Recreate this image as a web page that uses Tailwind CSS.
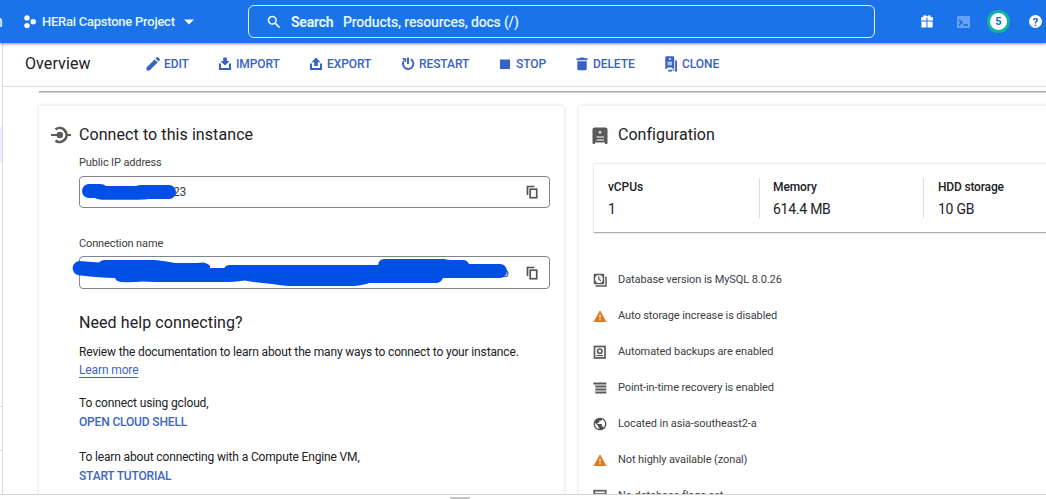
<!DOCTYPE html>
<html lang="en">
<head>
<meta charset="utf-8">
<title>Overview</title>
<script src="https://cdn.jsdelivr.net/npm/@tailwindcss/browser@4"></script>
</head>
<body class="w-[1046px] h-[499px] overflow-hidden bg-white font-['Roboto',sans-serif] text-[#202124] text-xs whitespace-nowrap flex flex-col">
<header class="relative z-10 h-[43px] shrink-0 bg-[#1a73e8] text-white flex items-center shadow-[0_1px_3px_rgba(0,0,0,0.45)]">
  <div class="w-6 flex justify-start overflow-hidden"><span class="-ml-[6px] mt-px text-base leading-5">n</span></div>
  <svg class="w-3 h-[14px]" viewBox="0 0 12 14" fill="#fff"><circle cx="3" cy="2.9" r="2.7"/><circle cx="3" cy="10.6" r="2.7"/><circle cx="9.2" cy="6.7" r="2.7"/></svg>
  <div class="ml-[6px] w-[142px] text-[13px] font-medium text-[#e3f8ff] tracking-[-0.25px]">HERai Capstone Project</div>
  <svg class="w-[10px] h-[6px]" viewBox="0 0 10 6" fill="#fff"><path d="M0 .5h10L5 5.5z"/></svg>
  <div class="ml-[54px] w-[627px] h-[33px] border border-[#d9f0ff] rounded-[6px] flex items-center pl-[18px] text-sm text-[#e3f8ff]">
    <svg class="w-[14px] h-[14px]" viewBox="0 0 14 14" fill="none" stroke="#e3f8ff" stroke-width="1.7"><circle cx="5.3" cy="5.3" r="3.8"/><path d="m8.1 8.1 4.5 4.5"/></svg>
    <span class="ml-[10px] w-[52px] font-bold tracking-[-0.25px]">Search</span>
    <span class="font-medium tracking-[-0.18px]">Products, resources, docs (/)</span>
  </div>
  <svg class="ml-[46px] w-3 h-[13px]" viewBox="0 0 12 13" fill="#fff"><path d="M0 2.3h2.1A1.7 1.7 0 0 1 3.8.3c.9 0 1.5.4 2.2 1.3C6.7.7 7.3.3 8.2.3a1.7 1.7 0 0 1 1.7 2H12v3.2H6.5V2.5h-1v3H0zM.4 6.5h5.1v6H.4zM6.5 6.5h5.1v6H6.5z"/></svg>
  <svg class="ml-6 w-[13px] h-3" viewBox="0 0 13 12"><rect width="13" height="12" rx="1" fill="#64a2f5"/><path d="m2 4 3 2.6-3 2.6M6.5 9H11" fill="none" stroke="#1a63d0" stroke-width="1.4"/></svg>
  <div class="ml-[17px] w-[23px] h-[23px] rounded-full border-[3px] border-[#13b3a3] bg-white text-[#1967d2] text-[11px] leading-[11px] font-bold flex items-center justify-center">5</div>
  <div class="ml-[19px] w-[13px] h-[13px] rounded-full bg-white text-[#1a63c8] text-[11px] leading-[11px] pt-px font-bold flex items-center justify-center">?</div>
</header>

<div class="h-[452px] shrink-0 flex border-b border-[#d4d6d9] overflow-hidden">
  <aside class="w-[3px] shrink-0 border-r border-[#dadce0] flex flex-col">
    <div class="mt-[84px] h-9 bg-[#e8f0fe]"></div>
    <div class="mt-[243px] h-[45px] border-y border-[#dadce0]"></div>
  </aside>
  <main class="flex-1 min-w-0 flex flex-col">
    <div class="h-11 shrink-0 border-b border-[#dadce0] flex items-center pb-[2px] pl-[22px] text-[#3763c4] font-medium tracking-[-0.08px]">
      <h1 class="w-[121px] mt-px text-base font-normal text-[#202124] tracking-[0.1px]">Overview</h1>
      <div class="w-[72px] flex items-center"><svg class="w-[18px] h-4" viewBox="0 0 18 16" fill="currentColor"><path d="M.5 14.5v-3L8.600 3.500l3 3-8.100 8zM9.500 2.600l1.300-1.300q.6-.5 1.200 0L13.700 3q.5.6 0 1.200l-1.200 1.300z"/></svg><span>EDIT</span></div>
      <div class="w-[91px] flex items-center"><svg class="w-[18px] h-4" viewBox="0 0 18 16" fill="currentColor"><path d="M5.200 1.500h3.600V5H11.500L7 9.500 2.500 5h2.700zM1 7.500h2v4.500h8V7.500h2v6.500H1z"/></svg><span>IMPORT</span></div>
      <div class="w-[92px] flex items-center"><svg class="w-[18px] h-4" viewBox="0 0 18 16" fill="currentColor"><path d="M5.200 10h3.600V6.200h2.700L7 1.500 2.500 6.200h2.700zM1 7.500h2v4.500h8V7.500h2v6.500H1z"/></svg><span>EXPORT</span></div>
      <div class="w-[97px] flex items-center"><svg class="w-[18px] h-4" viewBox="0 0 18 16" fill="none" stroke="currentColor" stroke-width="1.9"><path d="M7 1.500v6.500M9.800 3.300a5.200 5.200 0 1 1-7 1.600"/><path d="M.8 2.200h4.400v4.400z" fill="currentColor" stroke="none"/></svg><span>RESTART</span></div>
      <div class="w-[77px] flex items-center"><svg class="w-[18px] h-4" viewBox="0 0 18 16" fill="currentColor"><path d="M2 3.500h10v9.500H2z"/></svg><span>STOP</span></div>
      <div class="w-[89px] flex items-center"><svg class="w-[18px] h-4" viewBox="0 0 18 16" fill="currentColor"><path d="M1.500 2.300h3l1-.9h3l1 .9h3v2H1.500zM2.300 5.200h9.400v7.800q0 1.300-1.300 1.300H3.600q-1.300 0-1.300-1.300z"/></svg><span>DELETE</span></div>
      <div class="flex items-center"><svg class="w-[18px] h-4" viewBox="0 0 18 16"><path fill="currentColor" fill-rule="evenodd" d="M2.500.3h6.500q1.200 0 1.200 1.200V12.800H8.300V11.600H3.300v1.200H1.300V1.500q0-1.200 1.200-1.200zM5 2v1.700h1.600V2z"/><path d="M3.500 5.500h4.600v3.800H3.500z" fill="#a9c2f2"/><path d="M11.200 4q1.800 0 1.800 1.800v9.700h-1.900v-1H8v1H4.200v-1.800h7z" fill="currentColor"/></svg><span>CLONE</span></div>
    </div>
    <div class="ml-9 h-[5px] shrink-0 border-b border-[#a8a9ab] shadow-[0_1px_1px_rgba(0,0,0,0.18)]"></div>
    <div class="ml-9 mt-[14px] h-[400px] shrink-0 flex gap-[15px]">
      <section class="w-[525px] shrink-0 pt-[15px] pl-10 shadow-[0_0_4px_rgba(0,0,0,0.15)]">
        <div class="h-7 -ml-7 flex items-center">
          <svg class="w-5 h-[18px] mr-2" viewBox="0 0 20 18" fill="none" stroke="#5a5a5a"><path d="M0 9h7M16 9h4" stroke-width="1.900"/><circle cx="8.800" cy="9" r="3.200" fill="#5a5a5a" stroke="none"/><path d="M4.500 3.300A7 7 0 1 1 4.500 14.700" stroke-width="2.700"/></svg>
          <h2 class="text-base tracking-[0.08px]">Connect to this instance</h2>
        </div>
        <div class="mt-1 h-5 leading-5 text-[11px] text-[#3c4043] tracking-[-0.13px]">Public IP address</div>
        <div class="relative mt-[3px] w-[471px] h-8 border border-[#80868b] rounded-[4px] flex items-center justify-between pl-[93px] pr-[11px]">
          <span class="text-[#3c4043] tracking-[-0.3px]">23</span>
          <svg class="w-3 h-[14px]" viewBox="0 0 12 14" fill="none" stroke="#505357" stroke-width="1.700"><path d="M8.500 1.500H1.500v8.500"/><rect x="4.200" y="4.200" width="6.500" height="8.500"/></svg>
          <svg class="absolute left-0 top-0 w-[97px] h-8" viewBox="80 177 97 32" fill="#0050e6"><path d="M89 184h11q4 .2 6 2h30q3-1.200 6-1h27a7 7 0 0 1 0 14h-19q-6 .8-12 .8h-33q-7 0-10-1.800h-6a7 7 0 0 1 0-14z"/></svg>
        </div>
        <div class="mt-[26px] h-5 leading-5 text-[11px] text-[#3c4043] tracking-[-0.13px]">Connection name</div>
        <div class="relative mt-[2px] w-[471px] h-[33px] border border-[#80868b] rounded-[4px] flex items-center justify-between pl-[422px] pr-[11px]">
          <span class="text-[#3c4043]">b</span>
          <svg class="w-3 h-[14px]" viewBox="0 0 12 14" fill="none" stroke="#505357" stroke-width="1.700"><path d="M8.500 1.500H1.500v8.500"/><rect x="4.200" y="4.200" width="6.500" height="8.500"/></svg>
          <svg class="absolute -left-[8px] top-0 w-[440px] h-8" viewBox="72 257 440 32" fill="#0050e6"><path d="M79 261q10 .5 20 1.500 2-2.500 5-2.500h51q10 1 20 3h22q9-2 13 3v2h14q2-3 5-3h149q1-6 6-6h60q3 1 8 1h11q4 0 6 4h31a7 7 0 0 1 0 14h-57q-2 5-7 5h-67q-5 2-15 3h-65q-8-.5-17-2-15-1-27-3.500-13 1.500-20 1.500h-70q-6-.5-12-.5-13 1-22 .5-5-.5-6-4-15-.5-34-2.500a7.300 7.300 0 0 1-2-14.500z"/></svg>
        </div>
        <h2 class="mt-[22px] h-6 leading-6 text-base tracking-[0.08px]">Need help connecting?</h2>
        <p class="mt-2 h-[18px] leading-[18px] tracking-[-0.145px]">Review the documentation to learn about the many ways to connect to your instance.</p>
        <div class="h-[18px] flex"><a class="h-[17px] leading-[18px] border-b border-[#3f6fa5] text-[#3c66bd] tracking-[-0.13px]">Learn more</a></div>
        <p class="mt-[15px] h-[18px] leading-[18px] tracking-[-0.145px]">To connect using gcloud,</p>
        <p class="mt-px h-[18px] leading-[18px] font-medium text-[#3c66bd] tracking-[-0.16px]">OPEN CLOUD SHELL</p>
        <p class="mt-[17px] h-[18px] leading-[18px] tracking-[-0.145px]">To learn about connecting with a Compute Engine VM,</p>
        <p class="mt-px h-[18px] leading-[18px] font-medium text-[#3c66bd] tracking-[-0.19px]">START TUTORIAL</p>
      </section>
      <section class="w-[500px] shrink-0 pt-[15px] pl-[13px] shadow-[0_0_4px_rgba(0,0,0,0.15)]">
        <div class="h-7 flex items-center">
          <svg class="w-[16px] h-[17px] mr-[9px]" viewBox="-.5 0 16 17"><path fill="#5a5a5a" fill-rule="evenodd" d="M2 .5h11q2 0 2 2V16q0 1-1 1h-1.500v-1.500h-10V17H1q-1 0-1-1V2.500q0-2 2-2z"/><path d="M7.500 3.800v3M6 5.300h3M4 10h7.500M4 13h7.500" stroke="#fff" stroke-width="1.100"/></svg>
          <h2 class="ml-px text-base tracking-[0.02px]">Configuration</h2>
        </div>
        <div class="mt-[15px] ml-[2px] w-[486px] h-[69px] border-b border-[#a8abaa] shadow-[0_0_2px_rgba(0,0,0,0.22)] flex pl-[14px] pt-[14px]">
          <div class="w-[152px] h-10 border-r border-[#dadce0]"><div class="h-[18px] leading-[18px] font-medium tracking-[-0.1px]">vCPUs</div><div class="mt-1 leading-[18px] text-sm tracking-[-0.2px]">1</div></div>
          <div class="w-[164px] h-10 pl-[13px] border-r border-[#dadce0]"><div class="h-[18px] leading-[18px] font-medium tracking-[-0.1px]">Memory</div><div class="mt-1 leading-[18px] text-sm tracking-[-0.25px]">614.4 MB</div></div>
          <div class="pl-[14px]"><div class="h-[18px] leading-[18px] font-medium tracking-[-0.18px]">HDD storage</div><div class="mt-1 leading-[18px] text-sm tracking-[-0.25px]">10 GB</div></div>
        </div>
        <ul class="mt-[29px] text-[11px] text-[#3c4043] tracking-[-0.09px]">
          <li class="h-9 flex items-center"><svg class="w-[14px] h-[14px] mr-[11px] ml-px" viewBox="0 0 14 14"><path d="M2.500 13h10.500V3.500" fill="none" stroke="#5a5a5a" stroke-width="1.500"/><rect x=".7" y=".7" width="10.500" height="10.500" rx="1" fill="#5a5a5a"/><circle cx="6" cy="6" r="3.900" fill="#fff"/><path d="M5.800 3.300v3l2.200 1.500" fill="none" stroke="#5a5a5a" stroke-width="1.200"/></svg>Database version is MySQL 8.0.26</li>
          <li class="h-9 flex items-center"><svg class="w-[14px] h-[14px] mr-[11px] ml-px" viewBox="0 0 14 14"><path d="M7 1.300 13.500 13H.5z" fill="#d77b24"/><path d="M7 5.500v3.500M7 9.800v1.500" stroke="#f6dfc8" stroke-width="1.200"/></svg>Auto storage increase is disabled</li>
          <li class="h-9 flex items-center"><svg class="w-[14px] h-[14px] mr-[11px] ml-px" viewBox="0 0 14 14" fill="none" stroke="#5a5a5a"><rect x="1.500" y="1.500" width="10.500" height="11.500" stroke-width="1.700"/><circle cx="6.800" cy="6.200" r="2.200" stroke-width="1.700"/><path d="M3.500 10.600h6.500" stroke-width="1.200"/></svg>Automated backups are enabled</li>
          <li class="h-9 flex items-center"><svg class="w-[14px] h-[14px] mr-[11px] ml-px" viewBox="0 0 14 14" stroke="#5a5a5a" stroke-width="1.800"><path d="M.3 2.500h13M2.300 5.500h11M2.300 8.500h11M2.300 11.500h11"/></svg>Point-in-time recovery is enabled</li>
          <li class="h-9 flex items-center"><svg class="w-[14px] h-[14px] mr-[11px] ml-px" viewBox="1 1 22 22" fill="#505050"><path d="M12 2C6.480 2 2 6.480 2 12s4.480 10 10 10 10-4.480 10-10S17.520 2 12 2zm-1 17.930c-3.950-.49-7-3.850-7-7.930 0-.62.080-1.210.21-1.790L9 15v1c0 1.100.9 2 2 2v1.930zm6.900-2.540c-.26-.81-1-1.390-1.900-1.390h-1v-3c0-.55-.45-1-1-1H8v-2h2c.55 0 1-.45 1-1V7h2c1.100 0 2-.9 2-2v-.41c2.930 1.190 5 4.060 5 7.410 0 2.080-.8 3.970-2.100 5.390z"/></svg>Located in asia-southeast2-a</li>
          <li class="h-9 flex items-center"><svg class="w-[14px] h-[14px] mr-[11px] ml-px" viewBox="0 0 14 14"><path d="M7 1.300 13.500 13H.5z" fill="#d77b24"/><path d="M7 5.500v3.500M7 9.800v1.500" stroke="#f6dfc8" stroke-width="1.200"/></svg>Not highly available (zonal)</li>
          <li class="h-9 flex items-center"><svg class="w-[14px] h-[14px] mr-[11px] ml-px" viewBox="0 0 14 14" fill="none" stroke="#5a5a5a" stroke-width="1.700"><rect x="1.200" y="1.700" width="11.500" height="10.500"/><path d="M1 5h12M4.500 5v7"/></svg>No database flags set</li>
        </ul>
      </section>
    </div>
  </main>
</div>
<div class="h-1 shrink-0 flex items-end pl-[450px]"><div class="w-5 h-[2px] bg-[#c4c6c8] rounded-t-[1px]"></div></div>
</body>
</html>
